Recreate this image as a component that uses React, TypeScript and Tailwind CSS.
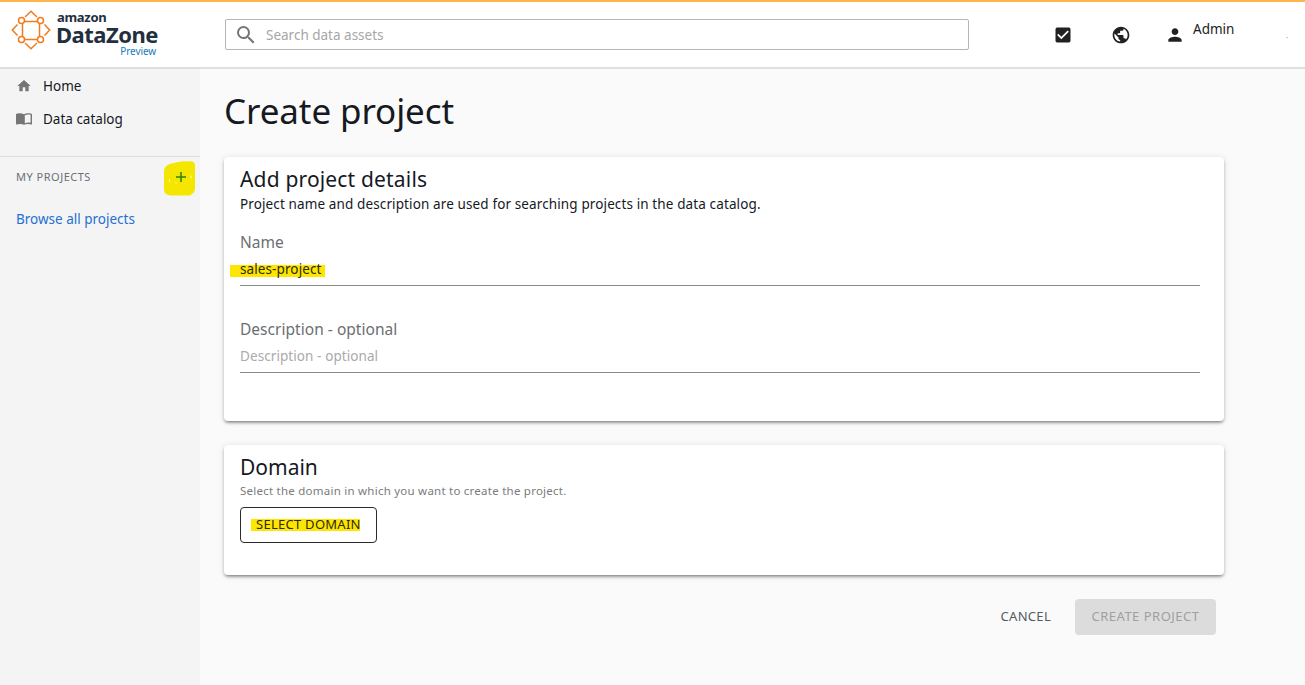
import type { ReactNode } from 'react'
import { MdCheckBox, MdHome, MdPerson, MdPublic, MdSearch } from 'react-icons/md'

function Logo() {
  return (
    <div className="flex w-[225px] shrink-0 pl-[11px] pt-2">
      <svg width="40" height="40" viewBox="0 0 40 40" fill="none" stroke="#f07c1c" strokeWidth="1.5">
        <path d="M14 11.500h12M14 29.500h12M11.500 14v13M28.500 14v13" />
        <path d="M14 7l6-5.700 6 5.700M14 33l6 5.700 6-5.700M6.500 14.500L1.300 20l5.200 5.500M33.500 14.500l5.200 5.500-5.200 5.500" />
        <circle cx="10.500" cy="10.500" r="3" />
        <circle cx="29.500" cy="10.500" r="3" />
        <circle cx="10.500" cy="29.500" r="3" />
        <circle cx="29.500" cy="29.500" r="3" />
      </svg>
      <div className="ml-[5px] w-[101px] text-[#232f3e]">
        <div className="h-[15px] pl-px text-[13px] leading-[15px] font-bold tracking-[-0.3px] whitespace-nowrap">amazon</div>
        <div className="h-[18px] text-[22px] leading-[18px] font-bold tracking-[-0.5px] whitespace-nowrap">DataZone</div>
        <div className="pr-px text-right text-[10px] leading-[16px] tracking-[-0.1px] text-[#1a7bb9]">Preview</div>
      </div>
    </div>
  )
}

function BookIcon() {
  return (
    <svg width="16" height="12" viewBox="0 0 16 12" className="shrink-0">
      <path d="M1.500 .500C4 0 6 .2 8 1.300 10 .2 12 0 14.500 .500L16 1v10.500c-3-.8-6-.8-8 .3-2-1.100-5-1.100-8-.3V1z" fill="#757575" />
      <path d="M8.800 2.200C10.500 1.400 12.500 1.300 14.600 1.800v7.900c-2-.4-4-.3-5.800.6z" fill="#f4f4f4" />
    </svg>
  )
}

function Header() {
  return (
    <header className="flex h-[69px] border-t-2 border-b-2 border-t-[#ffb44c] border-b-[#dfdfdf] bg-white">
      <Logo />
      <div className="mt-[17px] flex h-[31px] w-[744px] items-center rounded-xs border border-[#b5b5b5] pl-2">
        <MdSearch size={24} color="#757575" />
        <span className="ml-2 text-[13.5px] leading-5 text-[#a6a6a6]">Search data assets</span>
      </div>
      <div className="flex h-[65px] items-center pl-[84px] text-[#212121]">
        <MdCheckBox size={20} />
        <MdPublic size={20} className="ml-[38px]" />
        <MdPerson size={20} className="ml-[34px]" />
        <span className="mb-3 ml-2 w-[41px] text-[13.5px] leading-5">Admin</span>
      </div>
      <div className="mt-[35px] ml-[52px] h-px w-0.5 bg-[#ccc]" />
    </header>
  )
}

function Sidebar() {
  return (
    <aside className="w-[200px] shrink-0 bg-[#f4f4f4] text-[13.5px] text-[#16191f]">
      <nav className="h-[88px] border-b border-[#dedede] pl-4">
        <div className="flex h-[33px] items-center leading-5">
          <MdHome size={16} color="#757575" />
          <span className="ml-[11px]">Home</span>
        </div>
        <div className="flex h-[34px] items-center leading-5">
          <BookIcon />
          <span className="ml-[11px]">Data catalog</span>
        </div>
      </nav>
      <div className="flex h-[43px] justify-between pr-[5px] pl-4">
        <span className="text-[11px] leading-[39px] tracking-[0.5px] text-[#687078]">MY PROJECTS</span>
        <svg width="31" height="35" viewBox="0 0 31 35" className="mt-1">
          <path d="M0 11C0 5 4 3 10 2C16 0 23 0 28 .5Q31 1 31 4V27Q31 31 28 33L26 34.500H7Q0 34 0 28z" fill="#f5e600" />
          <path d="M5.500 18v3M12 21v1.500M27 14.500v3" stroke="#fffbb0" />
          <path d="M12 16h10M17 11v10" stroke="#2e8500" strokeWidth="1.600" />
        </svg>
      </div>
      <a className="block pl-4 leading-[38px] text-[#2570d3]">Browse all projects</a>
    </aside>
  )
}

function Card({ className, children }: { className: string; children: ReactNode }) {
  return (
    <section className={`w-[1000px] rounded bg-white px-4 shadow-[0_3px_3px_-2px_rgba(0,0,0,0.3),0_2px_3px_0_rgba(0,0,0,0.2),0_1px_6px_0_rgba(0,0,0,0.12)] ${className}`}>
      {children}
    </section>
  )
}

export default function App() {
  return (
    <div className="flex h-[685px] w-[1305px] flex-col overflow-hidden bg-[#fafafa] font-['Noto_Sans',sans-serif] text-[#16191f]">
      <Header />
      <div className="flex flex-1">
        <Sidebar />
        <main className="pl-6">
          <h1 className="h-[88px] text-[35px] leading-[84px] tracking-[-0.1px]">Create project</h1>
          <Card className="h-[264px]">
            <h2 className="pt-[7px] text-[21px] leading-[30px] tracking-[0.17px]">Add project details</h2>
            <p className="mt-px text-[13.5px] leading-[18px] tracking-[0.12px]">Project name and description are used for searching projects in the data catalog.</p>
            <div className="mt-[17px] w-[960px] border-b border-[#8a8a8a] pb-[6px]">
              <div className="text-[15.5px] leading-6 tracking-[0.03px] text-[#6b6f72]">Name</div>
              <div className="mt-[5px] flex h-5 items-center">
                <span className="mt-[3px] -ml-[10px] h-3 w-[95px] bg-[#ffe600] pl-[10px] text-[13.5px] leading-[9px] tracking-[0.1px] text-[#2b2b12]">sales-project</span>
              </div>
            </div>
            <div className="mt-[31px] w-[960px] border-b border-[#8a8a8a] pb-[6px]">
              <div className="text-[15.5px] leading-6 tracking-[0.03px] text-[#6b6f72]">Description - optional</div>
              <div className="mt-[5px] h-5 text-[13.5px] leading-[20px] tracking-[0.08px] text-[#aaa]">Description - optional</div>
            </div>
          </Card>
          <Card className="mt-6 h-[130px]">
            <h2 className="pt-[7px] text-[21px] leading-[30px]">Domain</h2>
            <p className="mt-px text-[11.5px] leading-[16px] tracking-[0.24px] text-[#7b7b7b]">Select the domain in which you want to create the project.</p>
            <button className="mt-2 flex h-9 w-[137px] items-center rounded border border-[#2b2b2b] pl-[10px]">
              <span className="h-3 w-[109px] bg-[#ffe600] pl-[5px] text-left text-[13px] leading-[11px] tracking-[0.27px] whitespace-nowrap text-[#2b2b12]">SELECT DOMAIN</span>
            </button>
          </Card>
          <div className="mt-6 flex h-9 w-[992px] items-center justify-end text-[13px] tracking-[0.3px]">
            <button className="mr-6 text-[#545b64]">CANCEL</button>
            <button className="h-9 w-[141px] rounded bg-[#dcdcdc] tracking-[0.5px] text-[#a0a0a0]">CREATE PROJECT</button>
          </div>
        </main>
      </div>
    </div>
  )
}
